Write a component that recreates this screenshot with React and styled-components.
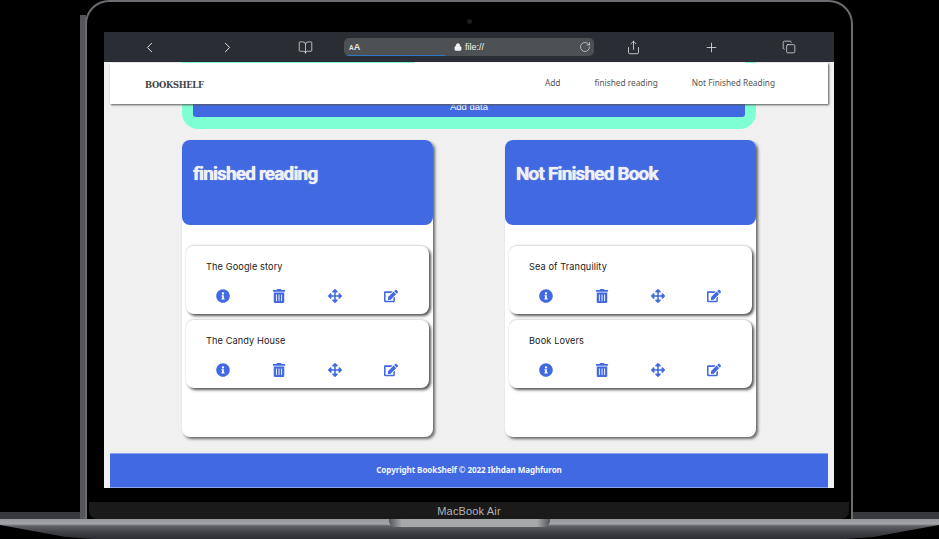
import React from "react";
import styled, { createGlobalStyle } from "styled-components";
import { FaInfoCircle, FaTrashAlt, FaArrowsAlt, FaEdit } from "react-icons/fa";
import { ChevronLeft, ChevronRight, BookOpen, Share, Plus, Copy, RotateCw, Lock } from "lucide-react";

const Global = createGlobalStyle`
  html, body { margin: 0; padding: 0; background: #000; }
  * { box-sizing: border-box; }
`;

const BLUE = "#4169e1";

const Stage = styled.div`
  position: relative; width: 939px; height: 539px; background: #000; overflow: hidden;
  display: flex; flex-direction: column; align-items: center;
`;
const Shoulder = styled.div`
  position: absolute; left: 0; right: 0; top: 512px; height: 8px; background: #38393c;
`;
const Hinge = styled.div`
  position: absolute; top: 15px; bottom: 20px; left: 80px; width: 6px; background: #55565a;
`;
const Lid = styled.div`
  position: relative; width: 768px; height: 519px; flex: none; background: #000; margin-left: -1px;
  border: 2px solid #6a6c70; border-bottom: 0; border-radius: 24px 24px 0 0;
  display: flex; flex-direction: column; align-items: center;
`;
const Camera = styled.div`
  width: 5px; height: 5px; border-radius: 50%; background: #1c1c1e; margin-top: 17px; flex: none;
`;
const Screen = styled.div`
  width: 730px; height: 456px; margin-top: 8px; flex: none; display: flex; flex-direction: column;
`;
const Chin = styled.div`
  width: 760px; height: 17px; margin-top: 14px; background: #1a1a1b; border-radius: 0 0 8px 8px;
  color: #b4b4b4; font: 400 11px/18px "Liberation Sans", sans-serif; text-align: center; letter-spacing: .15px;
`;
const Base = styled.div`
  position: relative; width: 100%; height: 20px; flex: none;
  background: linear-gradient(#96989b 0, #a3a4a7 5px, #5e6065 7px, #3d3e44 14px, #2c2d33 100%);
  clip-path: polygon(0 0, 100% 0, 100% 30%, 93% 90%, 90% 100%, 10% 100%, 7% 90%, 0 30%);
  display: flex; justify-content: center;
`;
const Notch = styled.div`
  width: 161px; height: 8px; border-radius: 0 0 6px 6px;
  background: linear-gradient(90deg, #55565a, #a7a8aa 8%, #a7a8aa 92%, #55565a);
`;

const Toolbar = styled.div`
  height: 30px; flex: none; background: #2a2d33; padding: 0 6px; color: #e2e3e5;
  display: grid; grid-template-columns: 78px 78px 78px 250px 78px 78px 78px; align-items: center;
`;
const Tool = styled.div`
  display: flex; justify-content: center; align-items: center;
`;
const UrlBar = styled.div`
  position: relative; height: 18px; border-radius: 5px; background: #4e5153; overflow: hidden;
  display: flex; align-items: center; justify-content: space-between; padding: 0 3px 0 5px;
  font: 700 9px/1 "Liberation Sans", sans-serif; color: #e6e6e6;
`;
const SmallCap = styled.span`
  font-size: 6.5px;
`;
const UrlText = styled.span`
  display: flex; align-items: center; gap: 3px; font-weight: 400; font-size: 9px; margin-left: -1px;
  color: #f4f4f4;
`;
const Progress = styled.div`
  position: absolute; left: 0; bottom: 0; width: 101px; height: 1px; background: #2f78c9;
`;

const Viewport = styled.div`
  position: relative; flex: 1; min-height: 0; background: #f0f0f0; overflow: hidden;
  display: flex; flex-direction: column;
`;
const Nav = styled.nav`
  position: absolute; top: 1px; left: 6px; width: 718px; height: 41px; background: #fff;
  box-shadow: 1px 1px 2px #555;
  display: flex; align-items: center; justify-content: space-between; padding: 0 53px 0 35px;
`;
const Brand = styled.div`
  font: 700 9.3px/1 "DejaVu Serif Condensed", "DejaVu Serif", serif; font-stretch: condensed; color: #444;
  margin-top: 2px; letter-spacing: -.3px;
`;
const NavLinks = styled.div`
  display: flex; gap: 34px; font: 400 8.3px/1 "Noto Sans", sans-serif; color: #555; margin-top: -1px;
`;

const FormCard = styled.div`
  width: 574px; height: 67px; margin-left: 78px; flex: none; background: #7fffd4;
  border-radius: 0 0 16px 16px; padding: 0 11px 12px 11px;
  display: flex; flex-direction: column; justify-content: space-between;
`;
const FieldEdge = styled.div`
  height: 1px; width: 331px; margin-left: 221px; background: #fff;
`;
const AddButton = styled.div`
  height: 20px; background: ${BLUE}; border-radius: 0 0 3px 3px; color: #fff; text-align: center;
  font: 400 9.5px/20px "Liberation Sans", sans-serif;
`;

const Columns = styled.div`
  margin: 11px 0 0 78px; width: 574px; display: flex; justify-content: space-between; flex: none;
`;
const Column = styled.section`
  width: 251px; height: 297px; background: #fff; border-radius: 8px; box-shadow: 2px 2px 3px #666;
`;
const ColumnHead = styled.header`
  height: 85px; background: ${BLUE}; border-radius: 8px; padding: 22px 11px 0;
  color: #eef0f6; font: 700 19px/24px Roboto, sans-serif; letter-spacing: -.85px;
  text-shadow: 0 0 1px #fff;
`;
const CardList = styled.div`
  padding: 21px 4px 0 4px; display: flex; flex-direction: column; gap: 6px;
`;
const Card = styled.article`
  height: 68px; background: #fff; border-radius: 8px; padding: 15px 9px 0;
  box-shadow: 2px 2px 3px #555, 0 -1px 2px #ddd;
`;
const CardTitle = styled.div`
  font: 400 9.2px/12px Inter, sans-serif; color: #222; padding-left: 11px; letter-spacing: .1px;
`;
const Actions = styled.div`
  margin-top: 16px; display: grid; grid-template-columns: repeat(4, 56px); color: ${BLUE};
`;
const Action = styled.span`
  display: flex; justify-content: center; font-size: 14px;
`;

const Footer = styled.footer`
  margin: 16px 6px 0; flex: 1; background: ${BLUE}; border-top: 1px solid #8aa4ee;
  border-bottom: 1px solid #8aa4ee; display: flex; align-items: center; justify-content: center;
  color: #f2f4ff; font: 700 8.1px/1 "Noto Sans", sans-serif; letter-spacing: -.1px;
`;

const data = [
  { title: "finished reading", books: ["The Google story", "The Candy House"] },
  { title: "Not Finished Book", books: ["Sea of Tranquility", "Book Lovers"] },
];

const BookCard = ({ title }) => (
  <Card>
    <CardTitle>{title}</CardTitle>
    <Actions>
      <Action><FaInfoCircle /></Action>
      <Action><FaTrashAlt /></Action>
      <Action><FaArrowsAlt /></Action>
      <Action><FaEdit /></Action>
    </Actions>
  </Card>
);

export default function App() {
  return (
    <Stage>
      <Global />
      <Shoulder />
      <Hinge />
      <Lid>
        <Camera />
        <Screen>
          <Toolbar>
            <Tool><ChevronLeft size={17} strokeWidth={1.4} /></Tool>
            <Tool><ChevronRight size={17} strokeWidth={1.4} /></Tool>
            <Tool><BookOpen size={15} strokeWidth={1.2} /></Tool>
            <UrlBar>
              <span><SmallCap>A</SmallCap>A</span>
              <UrlText><Lock size={8} strokeWidth={2.5} fill="currentColor" />file://</UrlText>
              <RotateCw size={12} strokeWidth={1.3} />
              <Progress />
            </UrlBar>
            <Tool><Share size={15} strokeWidth={1.3} /></Tool>
            <Tool><Plus size={15} strokeWidth={1.3} /></Tool>
            <Tool><Copy size={14} strokeWidth={1.3} /></Tool>
          </Toolbar>
          <Viewport>
            <FormCard>
              <FieldEdge />
              <AddButton>Add data</AddButton>
            </FormCard>
            <Columns>
              {data.map((col) => (
                <Column key={col.title}>
                  <ColumnHead>{col.title}</ColumnHead>
                  <CardList>
                    {col.books.map((b) => <BookCard key={b} title={b} />)}
                  </CardList>
                </Column>
              ))}
            </Columns>
            <Footer>Copyright BookShelf © 2022 Ikhdan Maghfuron</Footer>
            <Nav>
              <Brand>BOOKSHELF</Brand>
              <NavLinks>
                <span>Add</span>
                <span>finished reading</span>
                <span>Not Finished Reading</span>
              </NavLinks>
            </Nav>
          </Viewport>
        </Screen>
        <Chin>MacBook Air</Chin>
      </Lid>
      <Base><Notch /></Base>
    </Stage>
  );
}
